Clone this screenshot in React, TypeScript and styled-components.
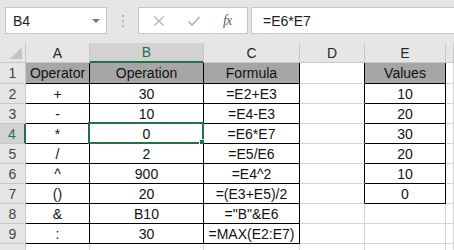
import React from 'react'
import styled, { createGlobalStyle, css } from 'styled-components'

const GlobalStyle = createGlobalStyle`
  html, body {
    margin: 0;
    padding: 0;
    background: #e6e6e6;
    overflow: hidden;
  }
  body {
    font-family: "Liberation Sans", Arial, sans-serif;
  }
`

const Page = styled.div`
  width: 454px;
  height: 250px;
  overflow: hidden;
  background: #e6e6e6;
`

const FormulaBar = styled.div`
  display: flex;
  align-items: center;
  height: 43px;
  padding-left: 5px;
  box-sizing: border-box;
`

const NameBox = styled.div`
  position: relative;
  width: 102px;
  height: 27px;
  margin-top: -2px;
  box-sizing: border-box;
  background: #fff;
  border: 1px solid #c6c6c6;
  display: flex;
  align-items: center;
  padding-left: 7px;
  font-size: 14px;
  color: #222;
`

const DropArrow = styled.span`
  position: absolute;
  right: 6px;
  top: 11px;
  width: 0;
  height: 0;
  border-left: 4px solid transparent;
  border-right: 4px solid transparent;
  border-top: 4px solid #777;
`

const Grip = styled.div`
  width: 31px;
  display: flex;
  flex-direction: column;
  align-items: center;
  gap: 3px;
  margin-top: -2px;
  span {
    width: 2px;
    height: 2px;
    background: #b4b4b4;
  }
`

const IconBox = styled.div`
  width: 110px;
  height: 27px;
  margin-top: -2px;
  box-sizing: border-box;
  background: #fff;
  border: 1px solid #c6c6c6;
  display: flex;
  align-items: center;
  padding-left: 14px;
  gap: 22px;
`

const Fx = styled.span`
  font-family: "Liberation Serif", "Times New Roman", serif;
  font-style: italic;
  font-size: 14px;
  color: #606060;
  letter-spacing: -1px;
`

const FormulaInput = styled.div`
  flex: 1;
  height: 27px;
  margin-top: -2px;
  margin-left: 3px;
  margin-right: -3px;
  box-sizing: border-box;
  background: #fff;
  border: 1px solid #c6c6c6;
  display: flex;
  align-items: center;
  padding-left: 11px;
  font-size: 14px;
  color: #222;
`

const Sheet = styled.div`
  display: grid;
  grid-template-columns: 26px 64px 114px 96px 65px 81px 1fr;
  grid-template-rows: 20px 21px repeat(9, 20px);
  background: #fff;
`

const HeadCell = styled.div<{ $active?: boolean }>`
  position: relative;
  box-sizing: border-box;
  background: #e6e6e6;
  border-right: 1px solid #c8c8c8;
  border-bottom: 1px solid #c8c8c8;
  display: flex;
  align-items: center;
  justify-content: center;
  font-size: 14px;
  color: #262626;
  ${(p) =>
    p.$active &&
    css`
      background: #d2d2d2;
      color: #217346;
    `}
`

const ColHead = styled(HeadCell)`
  ${(p) =>
    p.$active &&
    css`
      border-bottom: 2px solid #217346;
    `}
`

const RowHead = styled(HeadCell)`
  color: #444;
  ${(p) =>
    p.$active &&
    css`
      border-right: 2px solid #217346;
      color: #217346;
    `}
`

const Corner = styled(HeadCell)`
  &::after {
    content: '';
    position: absolute;
    right: 3px;
    bottom: 3px;
    width: 0;
    height: 0;
    border-left: 12px solid transparent;
    border-bottom: 12px solid #c4c4c4;
  }
`

const Cell = styled.div<{ $boxed?: boolean; $head?: boolean; $edge?: boolean }>`
  position: relative;
  box-sizing: border-box;
  border-right: 1px solid ${(p) => (p.$boxed || p.$edge ? '#000' : '#d4d4d4')};
  border-bottom: 1px solid ${(p) => (p.$boxed ? '#000' : '#d4d4d4')};
  background: ${(p) => (p.$head ? '#a6a6a6' : '#fff')};
  display: flex;
  align-items: center;
  justify-content: center;
  font-size: 14px;
  color: #111;
  white-space: nowrap;
  overflow: visible;
`

const Selection = styled.div`
  position: absolute;
  left: -2px;
  top: -2px;
  right: -1px;
  bottom: -1px;
  border: 2px solid #217346;
  pointer-events: none;
`

const FillHandle = styled.div`
  position: absolute;
  right: -4px;
  bottom: -4px;
  width: 5px;
  height: 5px;
  background: #217346;
  border: 1px solid #fff;
`

const rows: [string, string, string, string][] = [
  ['Operator', 'Operation', 'Formula', 'Values'],
  ['+', '30', '=E2+E3', '10'],
  ['-', '10', '=E4-E3', '20'],
  ['*', '0', '=E6*E7', '30'],
  ['/', '2', '=E5/E6', '20'],
  ['^', '900', '=E4^2', '10'],
  ['()', '20', '=(E3+E5)/2', '0'],
  ['&', 'B10', '="B"&E6', ''],
  [':', '30', '=MAX(E2:E7)', ''],
]

const cols = ['A', 'B', 'C', 'D', 'E', '']

export default function App() {
  return (
    <Page>
      <GlobalStyle />
      <FormulaBar>
        <NameBox>
          B4
          <DropArrow />
        </NameBox>
        <Grip>
          <span />
          <span />
          <span />
        </Grip>
        <IconBox>
          <svg width="12" height="12" viewBox="0 0 12 12">
            <path d="M1.5 1.5 L10.5 10.5 M10.5 1.5 L1.5 10.5" stroke="#b0b0b0" strokeWidth="1.3" fill="none" />
          </svg>
          <svg width="14" height="12" viewBox="0 0 14 12">
            <path d="M1.5 6.5 L5 10 L12.5 2" stroke="#b0b0b0" strokeWidth="1.6" fill="none" />
          </svg>
          <Fx>fx</Fx>
        </IconBox>
        <FormulaInput>=E6*E7</FormulaInput>
      </FormulaBar>
      <Sheet>
        <Corner />
        {cols.map((c, i) => (
          <ColHead key={i} $active={c === 'B'}>
            {c}
          </ColHead>
        ))}
        {Array.from({ length: 10 }).map((_, r) => {
          const data = rows[r]
          const boxedE = r < 7
          return (
            <React.Fragment key={r}>
              <RowHead $active={r === 3}>{r < 9 ? r + 1 : ''}</RowHead>
              <Cell $boxed={!!data} $head={r === 0}>{data?.[0]}</Cell>
              <Cell $boxed={!!data} $head={r === 0}>
                {data?.[1]}
                {r === 3 && (
                  <Selection>
                    <FillHandle />
                  </Selection>
                )}
              </Cell>
              <Cell $boxed={!!data} $head={r === 0}>{data?.[2]}</Cell>
              <Cell $edge={boxedE} />
              <Cell $boxed={boxedE} $head={r === 0}>{boxedE ? data?.[3] : ''}</Cell>
              <Cell />
            </React.Fragment>
          )
        })}
      </Sheet>
    </Page>
  )
}
